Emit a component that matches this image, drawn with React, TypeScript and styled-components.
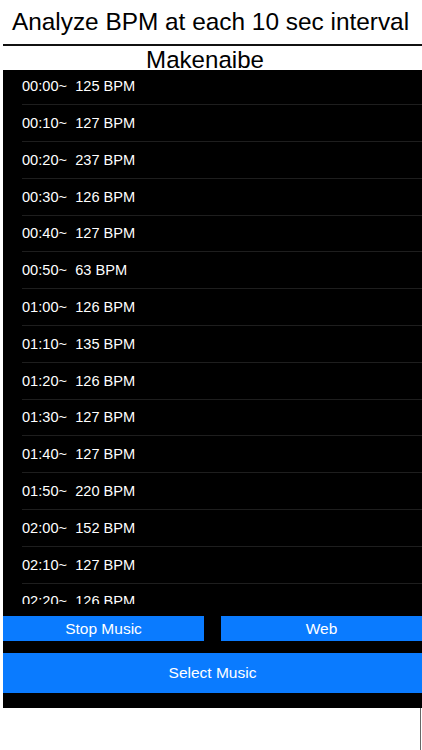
import React from "react";
import styled, { createGlobalStyle } from "styled-components";

const GlobalStyle = createGlobalStyle`
    html, body {
        margin: 0;
        padding: 0;
        background: #ffffff;
    }
    body {
        font-family: "Liberation Sans", Arial, sans-serif;
    }
`;

const Screen = styled.div`
    width: 422px;
    height: 750px;
    display: flex;
    flex-direction: column;
    overflow: hidden;
    background: #ffffff;
`;

const Title = styled.h1`
    margin: 0;
    margin-left: 3px;
    height: 44px;
    display: flex;
    align-items: center;
    justify-content: center;
    padding-right: 4px;
    font-size: 24.4px;
    font-weight: 400;
    color: #000;
    border-bottom: 2px solid #111;
`;

const SongName = styled.h2`
    margin: 0;
    height: 24px;
    display: flex;
    align-items: center;
    justify-content: center;
    padding-top: 3px;
    padding-right: 12px;
    box-sizing: border-box;
    font-size: 24.1px;
    font-weight: 400;
    color: #000;
`;

const Panel = styled.div`
    margin-left: 3px;
    height: 638px;
    background: #000;
    display: flex;
    flex-direction: column;
    padding-bottom: 15px;
    box-sizing: border-box;
`;

const List = styled.div`
    height: 534px;
    overflow: hidden;
`;

const ListInner = styled.div`
    margin-top: -1.6px;
`;

const Row = styled.div`
    height: 36.8px;
    box-sizing: border-box;
    margin-left: 19px;
    border-bottom: 1px solid #1e1e1e;
    display: flex;
    align-items: center;
    color: #fff;
    font-size: 14.6px;
    white-space: pre;
`;

const ButtonRow = styled.div`
    margin-top: 12px;
    display: flex;
    gap: 17px;
`;

const BlueButton = styled.button<{ $tall?: boolean; $width?: number }>`
    all: unset;
    box-sizing: border-box;
    flex: ${(p) => (p.$width ? `0 0 ${p.$width}px` : "1")};
    height: ${(p) => (p.$tall ? "40px" : "25px")};
    background: #0a7bff;
    color: #fff;
    font-family: "Liberation Sans", Arial, sans-serif;
    font-size: 15.5px;
    display: flex;
    align-items: center;
    justify-content: center;
    cursor: pointer;
`;

const SelectWrap = styled.div`
    margin-top: 12px;
    display: flex;
`;

const Footer = styled.div`
    flex: 1;
    width: 421px;
    box-sizing: border-box;
    border-right: 1px solid #666;
`;

const readings: [string, number][] = [
    ["00:00", 125],
    ["00:10", 127],
    ["00:20", 237],
    ["00:30", 126],
    ["00:40", 127],
    ["00:50", 63],
    ["01:00", 126],
    ["01:10", 135],
    ["01:20", 126],
    ["01:30", 127],
    ["01:40", 127],
    ["01:50", 220],
    ["02:00", 152],
    ["02:10", 127],
    ["02:20", 126],
    ["02:30", 127],
];

const App: React.FC = () => {
    return (
        <>
            <GlobalStyle />
            <Screen>
                <Title>Analyze BPM at each 10 sec interval</Title>
                <SongName>Makenaibe</SongName>
                <Panel>
                    <List>
                        <ListInner>
                            {readings.map(([time, bpm]) => (
                                <Row key={time}>{`${time}~  ${bpm} BPM`}</Row>
                            ))}
                        </ListInner>
                    </List>
                    <ButtonRow>
                        <BlueButton $width={201}>Stop Music</BlueButton>
                        <BlueButton>Web</BlueButton>
                    </ButtonRow>
                    <SelectWrap>
                        <BlueButton $tall>Select Music</BlueButton>
                    </SelectWrap>
                </Panel>
                <Footer />
            </Screen>
        </>
    );
};

export default App;
